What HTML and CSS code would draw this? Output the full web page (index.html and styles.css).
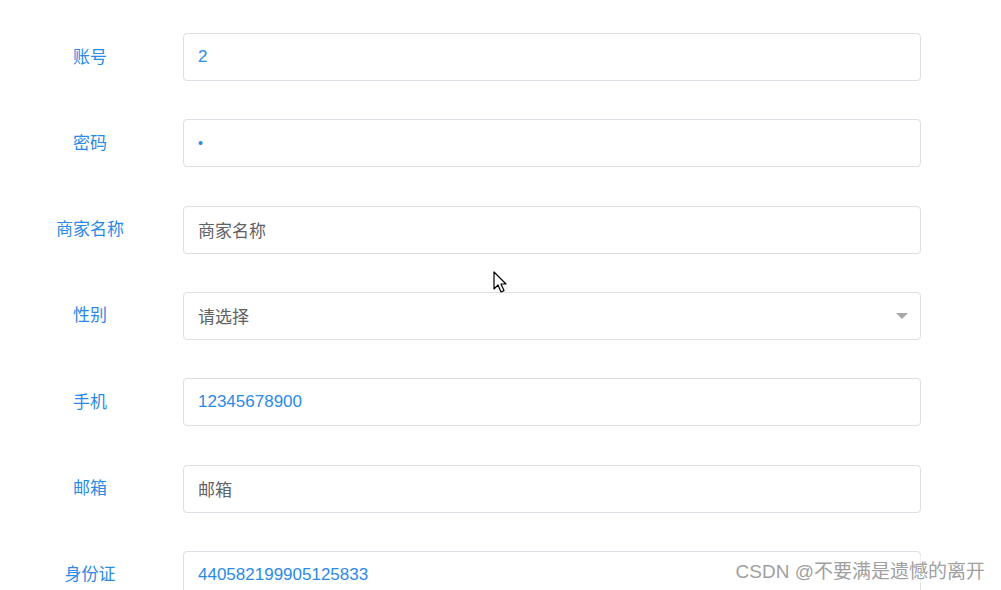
FILE: index.html
```html
<!DOCTYPE html>
<html lang="zh-CN">
<head>
    <meta charset="UTF-8">
    <title>商家信息</title>
    <link rel="stylesheet" href="styles.css">
</head>
<body>
    <form class="form">
        <label class="form-label">账号</label>
        <div class="field"><span class="value">2</span></div>

        <label class="form-label">密码</label>
        <div class="field"><span class="value dot">•</span></div>

        <label class="form-label">商家名称</label>
        <div class="field"><span class="placeholder">商家名称</span></div>

        <label class="form-label">性别</label>
        <div class="field select"><span class="placeholder">请选择</span><span class="arrow"></span></div>

        <label class="form-label">手机</label>
        <div class="field"><span class="value">12345678900</span></div>

        <label class="form-label">邮箱</label>
        <div class="field"><span class="placeholder">邮箱</span></div>

        <label class="form-label">身份证</label>
        <div class="field"><span class="value">440582199905125833</span></div>
    </form>

    <svg class="cursor" width="14" height="24" viewBox="0 0 14 24">
        <path d="M1 1 L1 18 L5 14 L8 21 L11 19.6 L8 13 L13 13 Z" fill="#fff" stroke="#000" stroke-width="1.2" stroke-linejoin="round"/>
    </svg>

    <div class="watermark">CSDN @不要满是遗憾的离开</div>
</body>
</html>
```

FILE: styles.css
```css
body {
    margin: 0;
    background: #fff;
    font-family: "Liberation Sans", "Noto Sans CJK SC", sans-serif;
    height: 590px;
    overflow: hidden;
    position: relative;
}
.form {
    display: grid;
    grid-template-columns: 180px 738px;
    column-gap: 3px;
    row-gap: 38.33px;
    padding-top: 33px;
}
.form-label {
    display: flex;
    align-items: center;
    justify-content: center;
    padding-bottom: 4px;
    color: #2b8ae6;
    font-size: 17px;
}
.field {
    height: 48px;
    box-sizing: border-box;
    border: 1px solid #dcdfe6;
    border-radius: 4px;
    padding: 0 14px;
    display: flex;
    align-items: center;
    font-size: 17px;
}
.value {
    color: #2b8ae6;
}
.dot {
    font-size: 14px;
}
.placeholder {
    color: #606266;
}
.select {
    justify-content: space-between;
}
.arrow {
    width: 0;
    height: 0;
    border-left: 6px solid transparent;
    border-right: 6px solid transparent;
    border-top: 6px solid #a8a8a8;
    margin-right: -2px;
}
.cursor {
    position: absolute;
    left: 493px;
    top: 271px;
}
.watermark {
    position: absolute;
    right: 16px;
    top: 556px;
    font-size: 19px;
    color: #a0a0a0;
    background: rgba(255, 255, 255, 0.6);
}
```
